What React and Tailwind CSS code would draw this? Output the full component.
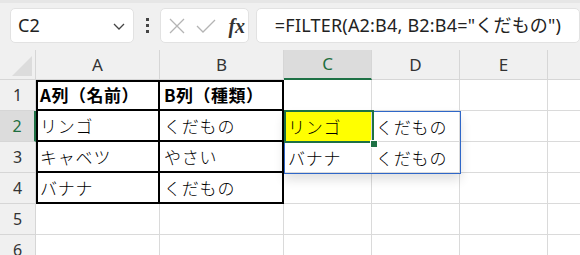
import React from "react";

const jp = { fontFamily: '"Noto Sans CJK JP", "Noto Sans", sans-serif' };
const ui = { fontFamily: '"Noto Sans", "Noto Sans CJK JP", sans-serif' };

const COLS = ["A", "B", "C", "D", "E", "F"];
const WIDTHS = ["w-[124px]", "w-[124px]", "w-[88px]", "w-[88px]", "w-[88px]", "w-[88px]"];

const data = {
  1: ["A列（名前）", "B列（種類）", "", "", "", ""],
  2: ["リンゴ", "くだもの", "リンゴ", "くだもの", "", ""],
  3: ["キャベツ", "やさい", "バナナ", "くだもの", "", ""],
  4: ["バナナ", "くだもの", "", "", "", ""],
  5: ["", "", "", "", "", ""],
  6: ["", "", "", "", "", ""],
};

function Cell({ r, c, text }) {
  const inBlock = r >= 1 && r <= 4 && c <= 1;
  let cls = `${WIDTHS[c]} h-[31px] shrink-0 flex items-center pl-[4px] text-[17px] leading-none text-black whitespace-nowrap overflow-visible `;
  if (inBlock) {
    cls += "border-r-2 border-b-2 border-black ";
  } else {
    cls += "border-r border-b border-[#dadada] ";
  }
  const left = inBlock && c === 0;
  const top = inBlock && r === 1;
  if (left && top) cls += "shadow-[inset_2px_0_0_#000,inset_0_2px_0_#000] ";
  else if (left) cls += "shadow-[inset_2px_0_0_#000] ";
  else if (top) cls += "shadow-[inset_0_2px_0_#000] ";
  if (r === 2 && c === 2) cls += "bg-[#ffff00] ";
  const bold = r === 1 && c <= 1;
  return (
    <div className={cls} style={jp}>
      <span className={bold ? "font-bold tracking-[0.5px]" : "font-[300] tracking-[0.8px]"}>{text}</span>
    </div>
  );
}

export default function App() {
  return (
    <div className="w-[580px] h-[255px] overflow-hidden bg-white relative">
      {/* toolbar */}
      <div className="h-[50px] bg-[#f0f0f0] flex items-start pt-[8px] pl-[10px] border-t-[3px] border-[#e6e6e6]">
        <div className="w-[126px] h-[35px] -mt-[3px] bg-white rounded-[5px] border border-[#e2e2e2] flex items-center pl-[7px] pr-[7px] justify-between">
          <span className="text-[18px] text-[#222]" style={ui}>C2</span>
          <svg width="14" height="10" viewBox="0 0 14 10">
            <path d="M2 3 L7 8 L12 3" fill="none" stroke="#444" strokeWidth="1.3" />
          </svg>
        </div>
        <div className="w-[27px] h-[35px] -mt-[3px] flex flex-col items-center justify-center gap-[3px]">
          <div className="w-[3px] h-[3px] bg-[#444]" />
          <div className="w-[3px] h-[3px] bg-[#444]" />
          <div className="w-[3px] h-[3px] bg-[#444]" />
        </div>
        <div className="w-[90px] h-[35px] -mt-[3px] bg-white rounded-[5px] border border-[#e2e2e2] flex items-center pl-[6px] gap-[8px]">
          <svg width="20" height="20" viewBox="0 0 20 20">
            <path d="M3 3 L17 17 M17 3 L3 17" stroke="#b4b4b4" strokeWidth="1.3" fill="none" />
          </svg>
          <svg width="22" height="20" viewBox="0 0 22 20">
            <path d="M2 10 L8 16 L20 4" stroke="#b4b4b4" strokeWidth="1.3" fill="none" />
          </svg>
          <span className="text-[20px] italic font-bold text-[#333] leading-none ml-[3px]" style={{ fontFamily: '"Liberation Serif", serif' }}>fx</span>
        </div>
        <div className="w-[330px] h-[35px] -mt-[3px] ml-[7px] bg-white rounded-[5px] border border-[#e2e2e2] flex items-center pl-[18px] whitespace-nowrap">
          <span className="text-[18px] tracking-[0.2px] text-[#222]" style={ui}>=FILTER(A2:B4, B2:B4="くだもの")</span>
        </div>
      </div>

      {/* column headers */}
      <div className="flex h-[30px] bg-[#f0f0f0]">
        <div className="w-[36px] h-[30px] shrink-0 border-r border-b border-[#d6d6d6] relative overflow-hidden">
          <svg className="absolute right-[3px] bottom-[3px]" width="20" height="20" viewBox="0 0 20 20">
            <path d="M20 0 L20 20 L0 20 Z" fill="#dcdcdc" />
          </svg>
        </div>
        {COLS.map((c, i) => (
          <div
            key={c}
            className={`${WIDTHS[i]} h-[30px] shrink-0 flex items-center justify-center text-[17px] border-r ${
              c === "C"
                ? "bg-[#dcdcdc] border-b-2 border-b-[#1e7145] border-r-[#d6d6d6] text-[#1e6e3f]"
                : "border-b border-[#d6d6d6] text-[#333]"
            }`}
            style={ui}
          >
            {c === "F" ? "" : c}
          </div>
        ))}
      </div>

      {/* rows */}
      {[1, 2, 3, 4, 5, 6].map((r) => (
        <div key={r} className="flex">
          <div
            className={`w-[36px] h-[31px] shrink-0 flex items-center justify-center text-[16px] border-b border-[#d6d6d6] ${
              r === 2
                ? "bg-[#dcdcdc] border-r-2 border-r-[#1e7145] text-[#1e6e3f]"
                : "bg-[#f0f0f0] border-r border-r-[#d6d6d6] text-[#333]"
            }`}
            style={ui}
          >
            {r}
          </div>
          {data[r].map((t, c) => (
            <Cell key={c} r={r} c={c} text={t} />
          ))}
        </div>
      ))}

      {/* spill range outline */}
      <div className="absolute left-[284px] top-[111px] w-[177px] h-[63px] border border-[#2f67c8] shadow-[0_6px_10px_rgba(0,0,0,0.12)] pointer-events-none" />
      {/* active cell */}
      <div className="absolute left-[284px] top-[110px] w-[90px] h-[33px] border-2 border-[#1e7145] pointer-events-none" />
      <div className="absolute left-[370px] top-[140px] w-[6px] h-[6px] bg-[#1e7145] border border-white box-content pointer-events-none" />
    </div>
  );
}
